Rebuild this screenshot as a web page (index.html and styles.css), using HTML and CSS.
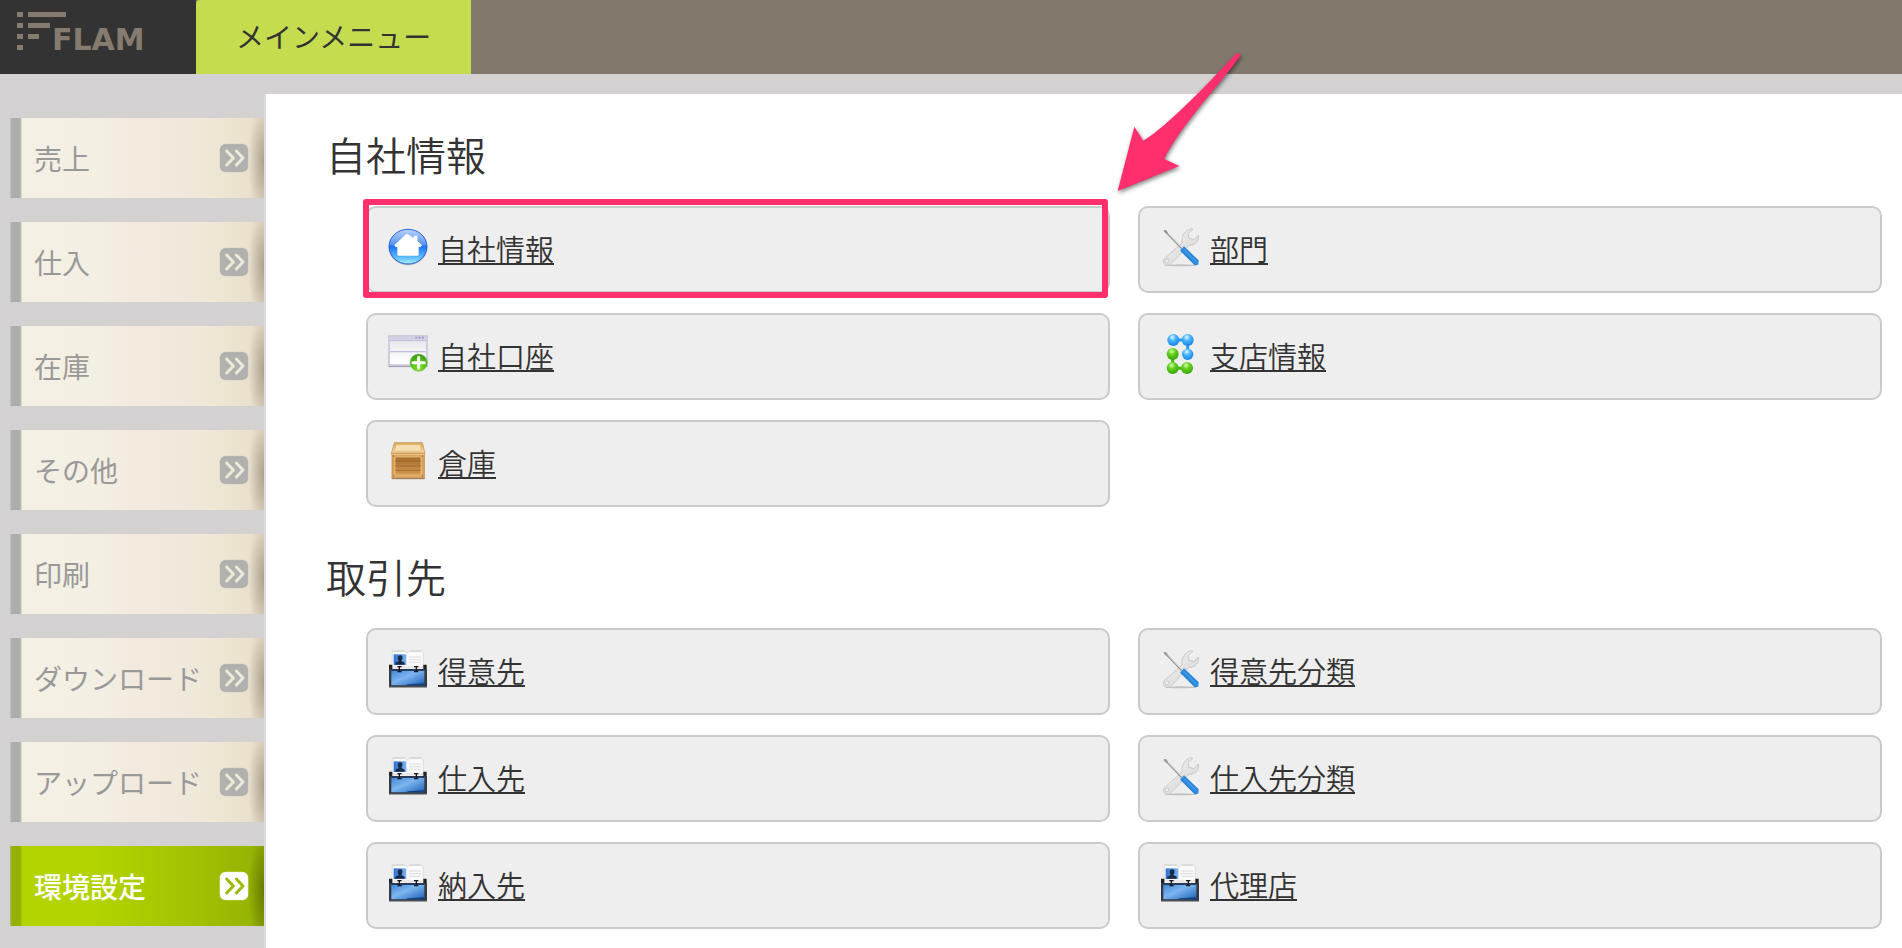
FILE: index.html
```
<!DOCTYPE html>
<html lang="ja">
<head>
<meta charset="utf-8">
<title>FLAM メインメニュー</title>
<link rel="stylesheet" href="styles.css">
</head>
<body>
<svg class="defs" aria-hidden="true">
  <defs>
    <linearGradient id="toolBlue" x1="0" y1="1" x2="1" y2="0"><stop offset="0" stop-color="#0b56a8"/><stop offset=".5" stop-color="#2f8fe0"/><stop offset="1" stop-color="#0d63b8"/></linearGradient>
    <linearGradient id="steel" x1="0" y1="0" x2="1" y2="1"><stop offset="0" stop-color="#f8f8f8"/><stop offset="1" stop-color="#cfcfcf"/></linearGradient>
    <linearGradient id="caseBlue" x1="0" y1="0" x2="1" y2="1"><stop offset="0" stop-color="#3f86d6"/><stop offset=".45" stop-color="#7db5f0"/><stop offset="1" stop-color="#1b5fb8"/></linearGradient>
    <linearGradient id="photoBlue" x1="0" y1="0" x2="1" y2="0"><stop offset="0" stop-color="#2d6fd0"/><stop offset="1" stop-color="#7db4f2"/></linearGradient>
    <linearGradient id="orb" x1="0" y1="0" x2="0" y2="1"><stop offset="0" stop-color="#b9d2fb"/><stop offset=".42" stop-color="#5d98f4"/><stop offset=".5" stop-color="#1f74ee"/><stop offset=".78" stop-color="#55b4fb"/><stop offset="1" stop-color="#a8f0ff"/></linearGradient>
    <linearGradient id="pane" x1="0" y1="0" x2="0" y2="1"><stop offset="0" stop-color="#e9e9ec"/><stop offset="1" stop-color="#ffffff"/></linearGradient>
    <radialGradient id="plusGreen" cx=".5" cy=".8" r=".8"><stop offset="0" stop-color="#7bea1c"/><stop offset="1" stop-color="#2f9a12"/></radialGradient>
    <linearGradient id="woodTop" x1="0" y1="0" x2="0" y2="1"><stop offset="0" stop-color="#dba65e"/><stop offset="1" stop-color="#f6dcaa"/></linearGradient>
    <linearGradient id="woodPanel" x1="0" y1="0" x2="0" y2="1"><stop offset="0" stop-color="#a86d30"/><stop offset="1" stop-color="#d3994f"/></linearGradient>
    <radialGradient id="ballBlue" cx=".42" cy=".28" r=".75"><stop offset="0" stop-color="#e4f7ff"/><stop offset=".4" stop-color="#47b3fb"/><stop offset="1" stop-color="#1681e6"/></radialGradient>
    <radialGradient id="ballGreen" cx=".42" cy=".28" r=".75"><stop offset="0" stop-color="#d8fbb0"/><stop offset=".4" stop-color="#62d01c"/><stop offset="1" stop-color="#35a208"/></radialGradient>
  </defs>
  <symbol id="icon-tools" viewBox="0 0 120 120">
    <ellipse cx="63" cy="115" rx="48" ry="3" fill="#b5b5b5" opacity=".8"/>
    <path d="M12 96 66 48C64 28 74 9 94 5l5 2-15 12 3 15 15 4 13-14c4 19-11 32-29 31L34 110c-8 8-22 6-24-4-1-5 0-8 2-10z" fill="url(#steel)" stroke="#b9b9b9" stroke-width="2"/>
    <ellipse cx="21" cy="102" rx="5" ry="7" transform="rotate(38 21 102)" fill="#eee" stroke="#bbb" stroke-width="2"/>
    <path d="m16 13 49 51" stroke="#929292" stroke-width="5"/><path d="m16 11 49 51" stroke="#f4f4f4" stroke-width="2"/>
    <path d="m12 9 7 1 5 8-5 3-8-8z" fill="#969696"/>
    <path d="m62 68 10-10 44 42-1 13-11 2-43-43z" fill="url(#toolBlue)"/>
    <path d="m71 67 38 37" stroke="#4aa3ec" stroke-width="3"/>
  </symbol>
  <symbol id="icon-case" viewBox="0 0 120 120">
    <path d="M13 7h38l7 5 6-5h38l4 5v42H12z" fill="#fafafa" stroke="#d2d2d2" stroke-width="2"/>
    <path d="M14 6h36M66 6h34" stroke="#c9d1cf" stroke-width="3"/>
    <path d="M17 16h38v32H17z" fill="url(#photoBlue)"/>
    <path d="M30 21q7-5 13 0v9l-3 6 10 5v6H22v-6l10-5-3-6z" fill="#152b49"/>
    <path d="M63 24h36M63 32h36M63 40h36" stroke="#ccc" stroke-width="2"/>
    <path d="M3 47h10v14H3zm103 0h10v14h-10z" fill="#222"/>
    <path d="M3 60h114v56H3z" fill="#363a42"/>
    <path d="M10 63h99v46H10z" fill="url(#caseBlue)"/>
    <path d="M10 64h99" stroke="#102c5c" stroke-width="3"/>
    <path d="M54 109h55v-6L60 106z" fill="#163f7c"/>
    <path d="M28 53h13M34 53v14M28 68h13M78 53h13M85 53v14M78 68h13" stroke="#17191f" stroke-width="4"/>
    <path d="M3 115h114" stroke="#aaa" stroke-width="3"/>
  </symbol>
  <symbol id="icon-home" viewBox="0 0 120 120">
    <ellipse cx="60" cy="64" rx="57" ry="51" fill="#8f96a0" opacity=".6"/>
    <ellipse cx="60" cy="59" rx="57" ry="52" fill="url(#orb)" stroke="#2764d4" stroke-width="3"/>
    <path d="M60 22 77 34v-8h11v16l14 13-5 5h-5v23q0 3-4 3H32q-4 0-4-3V60h-5l-4-5 33-32q4-3 8-1z" fill="#fff"/>
  </symbol>
  <symbol id="icon-window" viewBox="0 0 120 120">
    <path d="M2 5h116v93H2z" fill="#d3d2e5" stroke="#b9b8cc" stroke-width="2"/>
    <path d="M6 21h108v31H6zm0 34h108v35H6z" fill="url(#pane)"/>
    <path d="M6 53h108M5 20h110" stroke="#bdbde0" stroke-width="3"/>
    <path d="M2 97h116" stroke="#9a9aa5" stroke-width="3"/>
    <path d="M82 11h6m4 0h6m4 0h6" stroke="#9898ca" stroke-width="5"/>
    <circle cx="92" cy="86" r="26" fill="url(#plusGreen)" stroke="#87bd70" stroke-width="2"/>
    <path d="M92 70v33M75 86h34" stroke="#fff" stroke-width="9" stroke-linecap="round"/>
  </symbol>
  <symbol id="icon-crate" viewBox="0 0 120 120">
    <path d="M19 5h84l8 32H10z" fill="url(#woodTop)" stroke="#c48a43" stroke-width="2"/>
    <path d="M25 11h71l5 20H19z" fill="#f5deb0" stroke="#e3b876" stroke-width="2"/>
    <path d="M12 37h97v75H12z" fill="#dca45c" stroke="#b67833" stroke-width="2"/>
    <path d="M21 48h78v54H21z" fill="url(#woodPanel)" stroke="#f0cc93" stroke-width="2"/>
    <path d="M22 61h76M22 75h76M22 88h76" stroke="#955c24" stroke-width="2"/>
    <path d="M13 40h95" stroke="#f2cf95" stroke-width="3"/>
    <path d="M15 45h3m84 0h3M15 105h3m84 0h3" stroke="#875322" stroke-width="3"/>
    <path d="M11 113h99" stroke="#8e7a61" stroke-width="3"/>
  </symbol>
  <symbol id="icon-nodes" viewBox="0 0 120 120">
    <path d="M41 18h42v43" fill="none" stroke="#2c94ee" stroke-width="9"/>
    <path d="M38 60v43h43" fill="none" stroke="#48b812" stroke-width="9"/>
    <g fill="url(#ballBlue)"><circle cx="40" cy="18" r="18"/><circle cx="83" cy="18" r="18"/><circle cx="83" cy="61" r="17"/></g>
    <g fill="url(#ballGreen)"><circle cx="38" cy="60" r="18"/><circle cx="38" cy="102" r="18"/><circle cx="81" cy="102" r="18"/></g>
  </symbol>
  <symbol id="icon-next" viewBox="0 0 90 90">
    <rect x="2" y="2" width="86" height="86" rx="18" fill="currentColor"/>
    <path class="chevrons" d="m23 24 20 21-20 21M52 24l20 21-20 21" fill="none" stroke-width="9" stroke-linecap="round" stroke-linejoin="round"/>
  </symbol>
</svg>

<header class="topbar">
  <a class="logo" href="#" aria-label="FLAM">
    <svg class="logo-art" viewBox="0 0 196 74" aria-hidden="true">
      <path d="M17 12h6v5h-6zm11 0h38v5H28zM17 23h6v5h-6zm11 0h22v5H28zM17 34h6v5h-6zm11 0h11v5H28zM17 45h6v5h-6z"/>
      <text class="logo-name" x="52" y="50">FLAM</text>
    </svg>
  </a>
  <a class="tab" href="#">メインメニュー</a>
</header>

<div class="layout">
  <nav class="sidebar" aria-label="メニュー">
    <a class="side-item" href="#">売上<svg class="next" aria-hidden="true"><use href="#icon-next"/></svg></a>
    <a class="side-item" href="#">仕入<svg class="next" aria-hidden="true"><use href="#icon-next"/></svg></a>
    <a class="side-item" href="#">在庫<svg class="next" aria-hidden="true"><use href="#icon-next"/></svg></a>
    <a class="side-item" href="#">その他<svg class="next" aria-hidden="true"><use href="#icon-next"/></svg></a>
    <a class="side-item" href="#">印刷<svg class="next" aria-hidden="true"><use href="#icon-next"/></svg></a>
    <a class="side-item" href="#">ダウンロード<svg class="next" aria-hidden="true"><use href="#icon-next"/></svg></a>
    <a class="side-item" href="#">アップロード<svg class="next" aria-hidden="true"><use href="#icon-next"/></svg></a>
    <a class="side-item side-item-active" href="#" aria-current="page">環境設定<svg class="next" aria-hidden="true"><use href="#icon-next"/></svg></a>
  </nav>

  <main class="content">
    <section class="group">
      <h2 class="group-title">自社情報</h2>
      <ul class="cards">
        <li class="card card-marked">
          <svg class="icon" aria-hidden="true"><use href="#icon-home"/></svg><a class="card-link" href="#">自社情報</a>
          <span class="marker"></span>
          <svg class="arrow" viewBox="90 30 420 450" aria-hidden="true"><path d="M113 453 163 260 190 302C265 256 375 140 467 42Q472 37 478 41 482 45 478 52C410 145 300 260 253 357L298 378Z"/></svg>
        </li>
        <li class="card"><svg class="icon" aria-hidden="true"><use href="#icon-tools"/></svg><a class="card-link" href="#">部門</a></li>
        <li class="card"><svg class="icon" aria-hidden="true"><use href="#icon-window"/></svg><a class="card-link" href="#">自社口座</a></li>
        <li class="card"><svg class="icon" aria-hidden="true"><use href="#icon-nodes"/></svg><a class="card-link" href="#">支店情報</a></li>
        <li class="card"><svg class="icon" aria-hidden="true"><use href="#icon-crate"/></svg><a class="card-link" href="#">倉庫</a></li>
      </ul>
    </section>
    <section class="group">
      <h2 class="group-title">取引先</h2>
      <ul class="cards">
        <li class="card"><svg class="icon" aria-hidden="true"><use href="#icon-case"/></svg><a class="card-link" href="#">得意先</a></li>
        <li class="card"><svg class="icon" aria-hidden="true"><use href="#icon-tools"/></svg><a class="card-link" href="#">得意先分類</a></li>
        <li class="card"><svg class="icon" aria-hidden="true"><use href="#icon-case"/></svg><a class="card-link" href="#">仕入先</a></li>
        <li class="card"><svg class="icon" aria-hidden="true"><use href="#icon-tools"/></svg><a class="card-link" href="#">仕入先分類</a></li>
        <li class="card"><svg class="icon" aria-hidden="true"><use href="#icon-case"/></svg><a class="card-link" href="#">納入先</a></li>
        <li class="card"><svg class="icon" aria-hidden="true"><use href="#icon-case"/></svg><a class="card-link" href="#">代理店</a></li>
      </ul>
    </section>
  </main>
</div>
</body>
</html>
```

FILE: styles.css
```
* {
  box-sizing: border-box;
}

body {
  display: flex;
  flex-direction: column;
  min-height: 100vh;
  margin: 0;
  background: #d3d1d2;
  color: #333;
  font-family: "Noto Sans CJK JP", sans-serif;
  font-size: 28px;
  font-weight: 350;
}

.defs {
  position: absolute;
  width: 0;
  height: 0;
}

.topbar {
  display: flex;
  background: #82796d;
}

.logo {
  width: 196px;
  background: #333;
}

.logo-art {
  display: block;
  width: 100%;
  fill: #857c6f;
}

.logo-name {
  font-family: "DejaVu Sans", sans-serif;
  font-size: 30px;
  font-weight: 700;
}

.tab {
  display: flex;
  align-items: center;
  padding: 0 40px 2px;
  border-top-left-radius: 4px;
  background: #c5dc4f;
  color: #333;
  font-weight: 400;
  text-decoration: none;
}

.layout {
  display: flex;
  flex: 1;
  padding-top: 20px;
}

.sidebar {
  display: flex;
  flex-direction: column;
  gap: 24px;
  width: 264px;
  padding: 24px 0 20px 10px;
}

.side-item {
  display: flex;
  align-items: center;
  justify-content: space-between;
  height: 80px;
  padding: 0 15px 0 24px;
  background:
    radial-gradient(ellipse 16px 60px at 100% 55%, rgba(60, 50, 30, 0.36), transparent),
    linear-gradient(90deg, #c4c3c3, #adadad 2px, #adadad 10px, #c9c5b9 11px, #f4f0e4 12px, #f3efe3 35%, #f3eade 50%, #efe9da 75%, #ede5d0 85%, #e9dfcb);
  color: #999;
  font-weight: 400;
  text-decoration: none;
}

.side-item-active {
  background:
    radial-gradient(ellipse 16px 60px at 100% 55%, rgba(60, 70, 0, 0.5), transparent),
    linear-gradient(90deg, #b0ba84, #94b104 2px, #94b104 10px, #9cbb03 11px, #b3d400 12px, #b3d400 33%, #a1c002 75%, #93b104);
  color: #fff;
  font-weight: 500;
}

.next {
  width: 30px;
  height: 30px;
  color: #b0b0af;
  stroke: #ede8d8;
}

.side-item-active .next {
  color: #fff;
  stroke: #9bbb03;
}

.content {
  display: flex;
  flex: 1;
  flex-direction: column;
  gap: 39px;
  padding: 30px 20px 19px 60px;
  border-left: 2px solid #dedddd;
  background: #fff;
}

.group-title {
  margin: 0 0 22px;
  font-size: 40px;
  font-weight: 350;
  line-height: 60px;
}

.cards {
  display: grid;
  grid-template-columns: 1fr 1fr;
  gap: 20px 28px;
  margin: 0;
  padding: 0 0 0 40px;
  list-style: none;
}

.card {
  display: flex;
  gap: 10px;
  padding: 19px 20px 22px;
  border: 2px solid #cacaca;
  border-radius: 10px;
  background: #eee;
  line-height: 42px;
}

.card-marked {
  position: relative;
}

.icon {
  width: 40px;
  height: 40px;
}

.card-link {
  color: #333;
  font-size: 29px;
  text-decoration: underline 2px;
  text-decoration-skip-ink: none;
  text-underline-offset: 2px;
}

.marker {
  position: absolute;
  inset: -9px 0 -7px -5px;
  border: 6px solid #ff2e6d;
  border-radius: 3px;
}

.arrow {
  position: absolute;
  top: -158px;
  left: 100%;
  width: 140px;
  height: 150px;
  margin-left: 2px;
  fill: #ff2e6d;
  filter: drop-shadow(1px 2px 2px rgba(0, 0, 0, 0.5));
}
```
